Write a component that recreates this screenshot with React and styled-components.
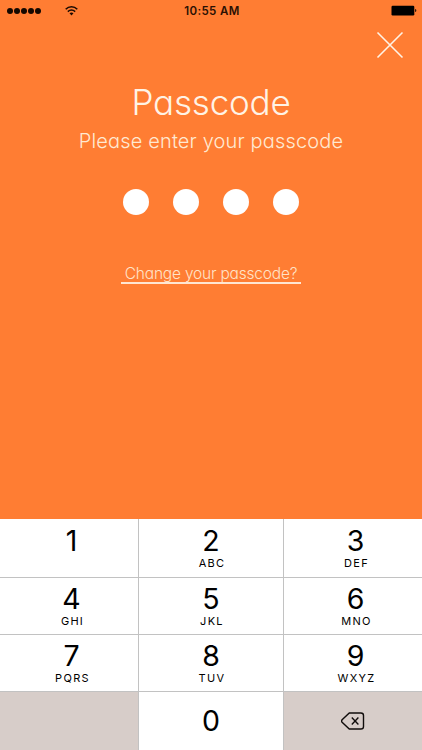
import React, { Component } from "react";
import styled, { createGlobalStyle } from "styled-components";

const GlobalStyle = createGlobalStyle`
  * {
    box-sizing: border-box;
  }

  body {
    margin: 0;
    font-family: Inter, "Liberation Sans", sans-serif;
  }
`;

const Screen = styled.div`
  display: flex;
  flex-direction: column;
  width: 422px;
  height: 750px;
  overflow: hidden;
  background-color: #ff7d33;
`;

const StatusBar = styled.header`
  display: grid;
  grid-template-columns: 1fr auto 1fr;
  align-items: center;
  height: 21px;
  padding: 0 5px 0 7px;
`;

const Carrier = styled.div`
  display: flex;
  align-items: center;
  gap: 24px;
`;

const Signal = styled.div`
  display: flex;
  gap: 1px;
`;

const SignalDot = styled.span`
  width: 6.1px;
  height: 6px;
  border-radius: 50%;
  background-color: #140800;
`;

const Clock = styled.span`
  color: #2a1003;
  font-size: 11.5px;
  font-weight: 600;
  letter-spacing: 0.4px;
`;

const Battery = styled.svg`
  justify-self: end;
`;

const TopRow = styled.div`
  display: flex;
  justify-content: flex-end;
  height: 53px;
  padding: 10px 18px 0 0;
`;

const CloseButton = styled.button`
  display: block;
  width: 28px;
  height: 28px;
  padding: 0;
  border: 0;
  background: none;
`;

const Content = styled.main`
  flex: 1;
  display: flex;
  flex-direction: column;
  align-items: center;
`;

const Text = styled.p`
  margin: ${props => props.margin || "0px"};
  color: ${props => props.color || "#fff3e6"};
  font-size: ${props => props.fontSize};
  line-height: ${props => props.lineHeight};
  letter-spacing: ${props => props.spacing || "0px"};
  font-weight: ${props => props.weight || "300"};
  font-feature-settings: "cv11";
  white-space: nowrap;
`;

const Dots = styled.div`
  display: flex;
  gap: 24px;
  margin: 37px 0 49px 0;
`;

const Dot = styled.span`
  width: 26.2px;
  height: 26.2px;
  border-radius: 50%;
  background-color: white;
`;

const ChangeLink = styled.div`
  width: 180px;
  height: 20px;
  display: flex;
  justify-content: center;
  border-bottom: 2px solid #ffe6d2;
`;

const Keypad = styled.div`
  display: grid;
  grid-template-columns: 139px 145px 138px;
  grid-template-rows: 59px 57px 57px 58px;
  height: 231px;
`;

const Key = styled.button`
  display: flex;
  flex-direction: column;
  align-items: center;
  justify-content: ${props => (props.centered ? "center" : "flex-start")};
  padding: ${props => props.padding || "0px"};
  border: 0 solid #c2c2c2;
  border-right-width: ${props => (props.last ? "0px" : "1px")};
  border-bottom-width: ${props => (props.bottom ? "0px" : "1px")};
  background-color: ${props => (props.muted ? "#d7cdc9" : "white")};
  color: black;
  font-family: inherit;
`;

const Digit = styled.span`
  font-size: 28.5px;
  line-height: 30px;
  font-weight: 400;
`;

const Letters = styled.span`
  padding-left: 2px;
  font-size: 11px;
  line-height: 14px;
  letter-spacing: 1.3px;
`;

const keys = [
  { digit: "1", letters: "" },
  { digit: "2", letters: "ABC" },
  { digit: "3", letters: "DEF" },
  { digit: "4", letters: "GHI" },
  { digit: "5", letters: "JKL" },
  { digit: "6", letters: "MNO" },
  { digit: "7", letters: "PQRS" },
  { digit: "8", letters: "TUV" },
  { digit: "9", letters: "WXYZ" }
];

const keyPadding = index => {
  const top = index < 3 ? "7px" : "6px";
  return index % 3 === 1 ? `${top} 0 0 0` : `${top} 0 0 5px`;
};

class App extends Component {
  render() {
    return (
      <Screen>
        <GlobalStyle />
        <StatusBar>
          <Carrier>
            <Signal>
              {[0, 1, 2, 3, 4].map(dot => (
                <SignalDot key={dot} />
              ))}
            </Signal>
            <svg width="13" height="10" viewBox="0 0 13 10" fill="none" stroke="#1d0b02">
              <path d="M0.7 3.2C4 0 9 0 12.3 3.2" strokeWidth="1.6" />
              <path d="M2.8 5.6c2.2-2 5.2-2 7.4 0" strokeWidth="1.5" />
              <path d="M4.5 7.3c1.2-1 2.8-1 4 0L6.5 9.5z" fill="#1d0b02" stroke="none" />
            </svg>
          </Carrier>
          <Clock>10:55 AM</Clock>
          <Battery width="26" height="11" viewBox="0 0 26 11">
            <rect x="0.5" y="0.7" width="22.8" height="9.8" rx="1.2" fill="black" />
            <path d="M24.2 4.1c1.5.3 1.5 2.7 0 3z" fill="black" />
          </Battery>
        </StatusBar>

        <TopRow>
          <CloseButton aria-label="Close">
            <svg width="28" height="28" viewBox="0 0 28 28" stroke="#fff3e6" strokeWidth="1.6">
              <path d="M1.5 1.5l25 25M26.5 1.5l-25 25" />
            </svg>
          </CloseButton>
        </TopRow>

        <Content>
          <Text as="h1" fontSize="35px" lineHeight="57px" spacing="-0.2px" weight="350">
            Passcode
          </Text>
          <Text fontSize="20px" lineHeight="21px" spacing="0.15px" color="#ffe9d2">
            Please enter your passcode
          </Text>
          <Dots>
            {[0, 1, 2, 3].map(dot => (
              <Dot key={dot} />
            ))}
          </Dots>
          <ChangeLink>
            <Text fontSize="15.5px" lineHeight="20px" spacing="-0.2px" color="#ffe3c8">
              Change your passcode?
            </Text>
          </ChangeLink>
        </Content>

        <Keypad>
          {keys.map((key, index) => (
            <Key key={key.digit} padding={keyPadding(index)} last={index % 3 === 2 ? 1 : 0}>
              <Digit>{key.digit}</Digit>
              {key.letters && <Letters>{key.letters}</Letters>}
            </Key>
          ))}
          <Key muted="true" bottom="true" aria-label="Blank" />
          <Key centered="true" bottom="true">
            <Digit>0</Digit>
          </Key>
          <Key muted="true" bottom="true" last="true" centered="true" aria-label="Delete">
            <svg width="24" height="18" viewBox="0 0 24 18" fill="none" stroke="#100c0b" strokeWidth="1.4">
              <path d="M8.3 1h11.6a2.6 2.6 0 0 1 2.6 2.6v10.8a2.6 2.6 0 0 1-2.6 2.6H8.3L1.1 10.2q-1-1.2 0-2.4z" />
              <path d="M10.8 5.6l6.6 6.8M17.4 5.6l-6.6 6.8" />
            </svg>
          </Key>
        </Keypad>
      </Screen>
    );
  }
}

export default App;
